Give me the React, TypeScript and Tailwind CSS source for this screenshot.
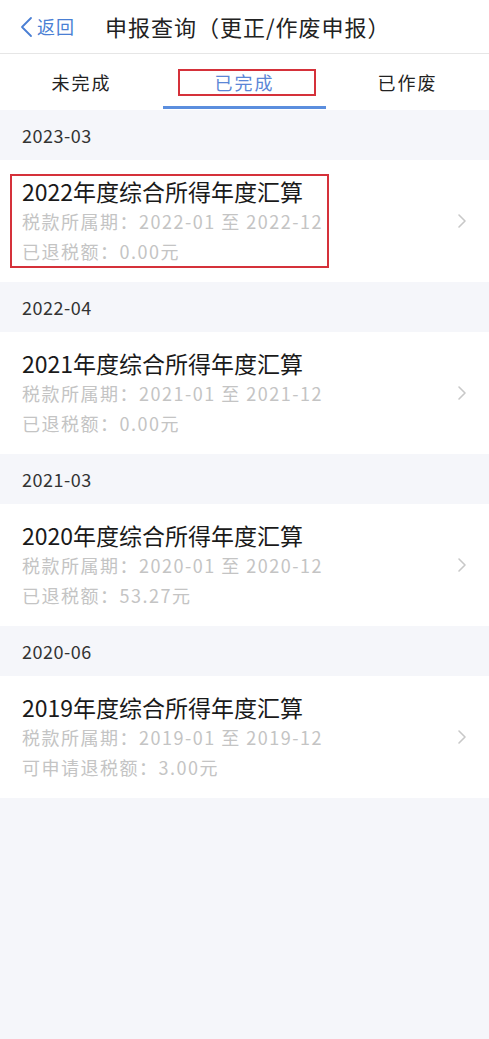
import React from "react";

const font = { fontFamily: '"Noto Sans CJK SC", "Noto Sans", sans-serif' };

type Record = {
  month: string;
  title: string;
  period: string;
  label: string;
  amount: string;
  marked?: boolean;
};

const records: Record[] = [
  { month: "2023-03", title: "2022年度综合所得年度汇算", period: "2022-01 至 2022-12", label: "已退税额", amount: "0.00元", marked: true },
  { month: "2022-04", title: "2021年度综合所得年度汇算", period: "2021-01 至 2021-12", label: "已退税额", amount: "0.00元" },
  { month: "2021-03", title: "2020年度综合所得年度汇算", period: "2020-01 至 2020-12", label: "已退税额", amount: "53.27元" },
  { month: "2020-06", title: "2019年度综合所得年度汇算", period: "2019-01 至 2019-12", label: "可申请退税额", amount: "3.00元" },
];

function Chevron({ className }: { className?: string }) {
  return (
    <svg width="10" height="16" viewBox="0 0 10 16" className={className} fill="none">
      <path d="M2 2l6 6-6 6" stroke="currentColor" strokeWidth="1.6" strokeLinecap="round" strokeLinejoin="round" />
    </svg>
  );
}

export default function App() {
  return (
    <div className="min-h-screen bg-[#f5f6fa]" style={font}>
      {/* Header */}
      <header className="h-[54px] flex items-center bg-white border-b border-[#e6e6e6]">
        <div className="flex items-center pl-[20px] text-[#4a7fd4] text-[18px] tracking-[1px]">
          <svg width="13" height="22" viewBox="0 0 13 22" fill="none" className="mr-[4px]">
            <path d="M11 2L2 11l9 9" stroke="currentColor" strokeWidth="1.8" strokeLinecap="round" strokeLinejoin="round" />
          </svg>
          <span>返回</span>
        </div>
        <h1 className="ml-[30px] text-[22px] text-[#222] tracking-[1px]">申报查询（更正/作废申报）</h1>
      </header>

      {/* Tabs */}
      <nav className="h-[56px] grid grid-cols-3 bg-white">
        <div className="flex items-center justify-center text-[18px] text-[#222] tracking-[2px]">未完成</div>
        <div className="relative flex items-center justify-center text-[18px] text-[#5b86d6] tracking-[2px]">
          已完成
          <div className="absolute left-[15px] right-[10px] top-[15px] h-[27px] border-2 border-[#d5313a]" />
          <div className="absolute left-0 right-0 bottom-[1px] h-[3px] bg-[#5b8ede]" />
        </div>
        <div className="flex items-center justify-center text-[18px] text-[#222] tracking-[2px]">已作废</div>
      </nav>

      {/* List */}
      {records.map((r) => (
        <section key={r.month}>
          <div className="h-[50px] flex items-center px-[22px] text-[18px] tracking-[0.5px] text-[#333]">{r.month}</div>
          <div className="h-[122px] bg-white flex items-center pl-[22px] pr-[22px]">
            <div className="relative flex-1">
              <div className="text-[23px] leading-[30px] text-[#1a1a1a]">{r.title}</div>
              <div className="text-[18px] leading-[30px] tracking-[1.5px] text-[#c4c4c4]">税款所属期：{r.period}</div>
              <div className="text-[18px] leading-[30px] tracking-[1.5px] text-[#c4c4c4]">{r.label}：{r.amount}</div>
              {r.marked && (
                <div className="absolute left-[-12px] top-[-2px] w-[319px] h-[94px] border-2 border-[#d5313a]" />
              )}
            </div>
            <Chevron className="text-[#c8c8c8]" />
          </div>
        </section>
      ))}
    </div>
  );
}
